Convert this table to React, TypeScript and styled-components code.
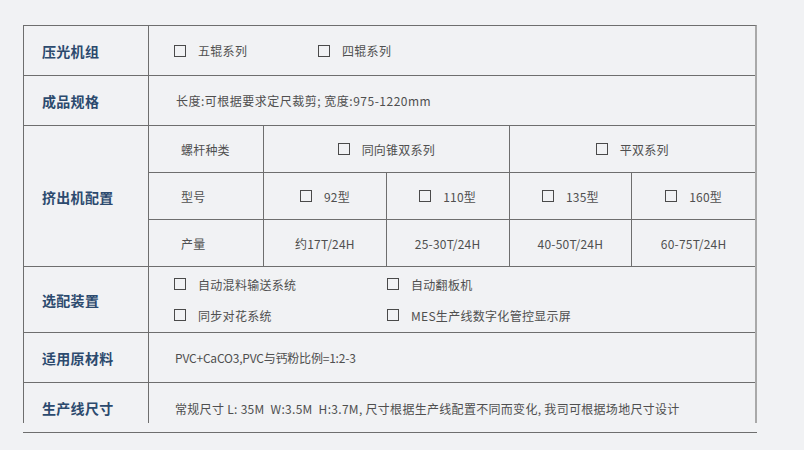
import React from "react";
import styled, { createGlobalStyle } from "styled-components";

const Global = createGlobalStyle`
  html, body { margin: 0; padding: 0; background: #f1f2f4; }
  body { font-family: "Noto Sans CJK SC", "Noto Sans", sans-serif; }
`;

const LINE = "#6e6e6e";

const Frame = styled.div`
  margin: 25px 0 0 23px;
  width: 734px;
  box-sizing: border-box;
  padding-bottom: 9px;
  border-bottom: 1px solid ${LINE};
`;

const Table = styled.div`
  border-top: 1px solid ${LINE};
  border-left: 1px solid ${LINE};
  border-right: 2px solid #a9a9a9;
`;

const Row = styled.div<{ $h: number; $last?: boolean }>`
  display: grid;
  grid-template-columns: 125px 1fr;
  height: ${(p) => p.$h}px;
  box-sizing: border-box;
  border-bottom: ${(p) => (p.$last ? "none" : `1px solid ${LINE}`)};
`;

const Label = styled.div<{ $padTop?: number }>`
  display: flex;
  align-items: center;
  padding-left: 18px;
  padding-top: ${(p) => p.$padTop || 0}px;
  box-sizing: border-box;
  border-right: 1px solid ${LINE};
  font-size: 14px;
  font-weight: 700;
  color: #2c4a6e;
  letter-spacing: 0.3px;
`;

const Content = styled.div<{ $padTop?: number; $pad?: number; $ls?: number }>`
  display: flex;
  align-items: center;
  padding-left: ${(p) => p.$pad ?? 25}px;
  padding-top: ${(p) => p.$padTop || 0}px;
  box-sizing: border-box;
  font-size: 12px;
  color: #4f4f4f;
  letter-spacing: ${(p) => p.$ls ?? 0.3}px;
  white-space: pre;
`;

const Box = styled.span`
  display: inline-block;
  width: 10px;
  height: 10px;
  border: 1.5px solid #4a4a4a;
  box-sizing: content-box;
  margin-right: 12px;
  flex: none;
`;

const Option = styled.span<{ $w?: number }>`
  display: inline-flex;
  align-items: center;
  width: ${(p) => (p.$w ? `${p.$w}px` : "auto")};
  white-space: nowrap;
`;

const Sub = styled.div`
  display: grid;
  grid-template-columns: 115px repeat(4, 1fr);
  grid-template-rows: repeat(3, 47px);
`;

const SubCell = styled.div<{ $span?: number; $left?: boolean; $lastRow?: boolean; $lastCol?: boolean }>`
  grid-column: span ${(p) => p.$span || 1};
  display: flex;
  align-items: center;
  justify-content: ${(p) => (p.$left ? "flex-start" : "center")};
  padding-left: ${(p) => (p.$left ? "32px" : "0")};
  box-sizing: border-box;
  border-right: ${(p) => (p.$lastCol ? "none" : `1px solid ${LINE}`)};
  border-bottom: ${(p) => (p.$lastRow ? "none" : `1px solid ${LINE}`)};
  font-size: 12px;
  color: #4f4f4f;
  letter-spacing: 0.2px;
  white-space: nowrap;
`;

const OptGrid = styled.div`
  display: grid;
  grid-template-columns: 213px 1fr;
  row-gap: 14px;
  padding: 0 0 0 25px;
  align-content: center;
  font-size: 12px;
  color: #4f4f4f;
  letter-spacing: 0.3px;
`;

const Check: React.FC<{ children: React.ReactNode; w?: number }> = ({ children, w }) => (
  <Option $w={w}>
    <Box />
    {children}
  </Option>
);

export default function App() {
  return (
    <>
      <Global />
      <Frame>
        <Table>
          <Row $h={50}>
            <Label>压光机组</Label>
            <Content>
              <Check w={144}>五辊系列</Check>
              <Check>四辊系列</Check>
            </Content>
          </Row>
          <Row $h={50}>
            <Label>成品规格</Label>
            <Content $pad={27} $ls={0.5}>长度:可根据要求定尺裁剪; 宽度:975-1220mm</Content>
          </Row>
          <Row $h={141}>
            <Label>挤出机配置</Label>
            <Sub>
              <SubCell $left>螺杆种类</SubCell>
              <SubCell $span={2}>
                <Check>同向锥双系列</Check>
              </SubCell>
              <SubCell $span={2} $lastCol>
                <Check>平双系列</Check>
              </SubCell>
              <SubCell $left>型号</SubCell>
              <SubCell>
                <Check>92型</Check>
              </SubCell>
              <SubCell>
                <Check>110型</Check>
              </SubCell>
              <SubCell>
                <Check>135型</Check>
              </SubCell>
              <SubCell $lastCol>
                <Check>160型</Check>
              </SubCell>
              <SubCell $left $lastRow>产量</SubCell>
              <SubCell $lastRow>约17T/24H</SubCell>
              <SubCell $lastRow>25-30T/24H</SubCell>
              <SubCell $lastRow>40-50T/24H</SubCell>
              <SubCell $lastRow $lastCol>60-75T/24H</SubCell>
            </Sub>
          </Row>
          <Row $h={66}>
            <Label>选配装置</Label>
            <OptGrid>
              <Check>自动混料输送系统</Check>
              <Check>自动翻板机</Check>
              <Check>同步对花系统</Check>
              <Check>MES生产线数字化管控显示屏</Check>
            </OptGrid>
          </Row>
          <Row $h={50}>
            <Label>适用原材料</Label>
            <Content $pad={26} $ls={-0.2}>PVC+CaCO3,PVC与钙粉比例=1:2-3</Content>
          </Row>
          <Row $h={40} $last>
            <Label $padTop={10}>生产线尺寸</Label>
            <Content $padTop={10} $pad={26}>
              常规尺寸 L: 35M  W:3.5M  H:3.7M, 尺寸根据生产线配置不同而变化, 我司可根据场地尺寸设计
            </Content>
          </Row>
        </Table>
      </Frame>
    </>
  );
}
